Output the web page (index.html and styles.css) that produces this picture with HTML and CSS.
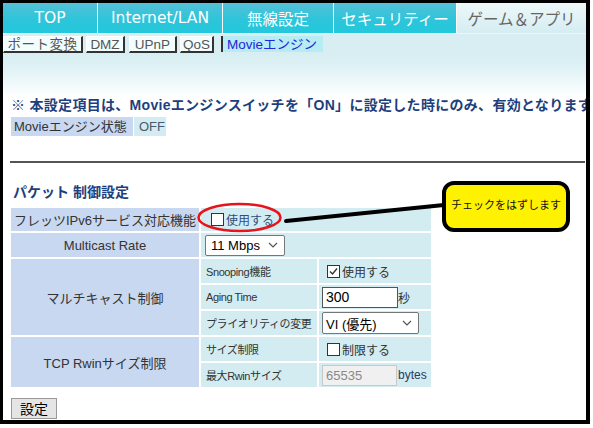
FILE: index.html
```html
<!DOCTYPE html>
<html lang="ja">
<head>
<meta charset="utf-8">
<title>Movieエンジン</title>
<link rel="stylesheet" href="styles.css">
</head>
<body>
<div class="frame">
  <nav class="tabs">
    <div class="tab t1">TOP</div>
    <div class="tab t2">Internet/LAN</div>
    <div class="tab t3">無線設定</div>
    <div class="tab t4">セキュリティー</div>
    <div class="tab t5 active">ゲーム＆アプリ</div>
  </nav>
  <div class="subnav">
    <span class="sub s1">ポート変換</span>
    <span class="sub s2">DMZ</span>
    <span class="sub s3">UPnP</span>
    <span class="sub s4">QoS</span>
    <span class="sub s5">Movieエンジン</span>
  </div>
  <div class="main">
    <p class="notice">※ 本設定項目は、Movieエンジンスイッチを「ON」に設定した時にのみ、有効となります</p>
    <div class="status"><span class="st-label">Movieエンジン状態</span><span class="st-val">OFF</span></div>
    <hr class="rule">
    <h2 class="sec">パケット 制御設定</h2>
    <table class="pkt">
      <colgroup><col class="c1"><col class="c2"><col class="c3"></colgroup>
      <tr class="r1">
        <th>フレッツIPv6サービス対応機能</th>
        <td colspan="2" class="v v1"><span class="cb"></span><span class="lbl blue">使用する</span></td>
      </tr>
      <tr>
        <th>Multicast Rate</th>
        <td colspan="2" class="v v2"><span class="select w80"><span>11 Mbps</span><svg width="10" height="6" viewBox="0 0 10 6"><polyline points="1,1 5,5 9,1" fill="none" stroke="#555" stroke-width="1.2"/></svg></span></td>
      </tr>
      <tr>
        <th rowspan="3">マルチキャスト制御</th>
        <td class="sl">Snooping機能</td>
        <td class="v v3"><svg class="cbs" width="13" height="13" viewBox="0 0 13 13"><rect x="0.5" y="0.5" width="12" height="12" fill="#fff" stroke="#333"/><polyline points="3,6.5 5.5,9 10,3.5" fill="none" stroke="#333" stroke-width="1.4"/></svg><span class="lbl">使用する</span></td>
      </tr>
      <tr>
        <td class="sl">Aging Time</td>
        <td class="v v4"><span class="inp">300</span><span class="unit">秒</span></td>
      </tr>
      <tr>
        <td class="sl">プライオリティの変更</td>
        <td class="v v4"><span class="select w97"><span>VI (優先)</span><svg width="10" height="6" viewBox="0 0 10 6"><polyline points="1,1 5,5 9,1" fill="none" stroke="#555" stroke-width="1.2"/></svg></span></td>
      </tr>
      <tr>
        <th rowspan="2">TCP Rwinサイズ制限</th>
        <td class="sl">サイズ制限</td>
        <td class="v v3"><span class="cb"></span><span class="lbl">制限する</span></td>
      </tr>
      <tr>
        <td class="sl">最大Rwinサイズ</td>
        <td class="v v4"><span class="inp dis">65535</span><span class="bytes">bytes</span></td>
      </tr>
    </table>
    <button class="submit" type="button">設定</button>
  </div>
</div>
<svg class="overlay" width="593" height="428" viewBox="0 0 593 428">
  <ellipse cx="239.5" cy="217.5" rx="41" ry="13.5" fill="none" stroke="#e8141c" stroke-width="2.5"/>
  <line x1="286" y1="221" x2="444" y2="205" stroke="#000" stroke-width="4" stroke-linecap="round"/>
</svg>
<div class="callout">チェックをはずします</div>
</body>
</html>
```
FILE: styles.css
```css
* { box-sizing: border-box; }
html, body { margin: 0; padding: 0; background: #fff; }
body {
  font-family: "Liberation Sans", "Noto Sans CJK JP", sans-serif;
  width: 593px;
  height: 428px;
  position: relative;
  overflow: hidden;
}
.frame {
  width: 590px;
  height: 424px;
  border-style: solid;
  border-color: #000;
  border-width: 3px 4px 4px 3px;
  overflow: hidden;
  background: #fff;
}
.tabs { display: flex; height: 30px; }
.tab {
  display: flex;
  align-items: center;
  justify-content: center;
  color: #fff;
  font-family: "DejaVu Sans", "Noto Sans CJK JP", sans-serif;
  font-size: 15.5px;
  background: linear-gradient(#55c0d8, #2dc5da 55%, #22c8dc);
  border-left: 1px solid #fff;
  white-space: nowrap;
}
.t1 { width: 94px; border-left: 0; }
.t2 { width: 125px; }
.t3 { width: 111px; }
.t4 { width: 123px; }
.t5 { flex: 1; }
.tab.active { background: linear-gradient(#eef8fa, #d4edf1); color: #666; }

.subnav {
  display: flex;
  align-items: flex-end;
  height: 20px;
  border-top: 1px solid #e6fafa;
  background: #d8eef2;
}
.sub {
  display: flex;
  align-items: center;
  justify-content: center;
  height: 17px;
  font-size: 13.5px;
  line-height: 15px;
  color: #555;
  background: #f2fefe;
  border-style: solid;
  border-width: 1px 2px 2px 1px;
  border-color: #fff #333 #333 #fff;
  white-space: nowrap;
  overflow: hidden;
}
.s1 { width: 80px; letter-spacing: 0.5px; }
.s2 { width: 39px; margin-left: 3px; }
.s3 { width: 48px; margin-left: 4px; }
.s4 { width: 34px; margin-left: 3px; }
.s5 {
  width: 102px;
  margin-left: 7px;
  background: #b6ecf4;
  color: #2424d8;
  border-width: 0 0 0 2px;
  border-left-color: #333;
  justify-content: flex-start;
  padding-left: 4px;
  height: 16px;
  align-self: flex-start;
  margin-top: 2px;
}

.main {
  padding: 43px 0 0 8px;
  height: 371px;
  background: linear-gradient(#d6eef2 0, #e2f3f6 18px, #fff 44px) no-repeat;
}
.notice {
  margin: 0;
  font-size: 14px;
  font-weight: bold;
  color: #1e3f7d;
  line-height: 18px;
  white-space: nowrap;
  letter-spacing: 0.3px;
}
.status { display: flex; gap: 1px; margin-top: 3px; height: 19px; font-size: 13px; line-height: 19px; }
.st-label { width: 122px; background: #c8d8f0; color: #333; padding-left: 3px; white-space: nowrap; }
.st-val { width: 32px; background: #d2ecf2; color: #4a5a6a; padding-left: 5px; }
.rule {
  margin: 25px 0 0 -1px;
  border: 0;
  border-top: 2px solid #555;
  width: 575px;
  height: 0;
}
.sec {
  margin: 20px 0 0 2px;
  font-size: 14px;
  font-weight: bold;
  color: #1e3f7d;
  line-height: 18px;
}
.pkt {
  margin: 5px 0 0 -2px;
  border-collapse: separate;
  border-spacing: 2px;
  table-layout: fixed;
  width: 424px;
}
.c1 { width: 188px; }
.c2 { width: 116px; }
.c3 { width: 112px; }
.pkt tr { height: 24px; }
.pkt tr.r1 { height: 23px; }
.pkt th {
  background: #c8d8f0;
  font-weight: normal;
  font-size: 13px;
  color: #333;
  text-align: center;
  padding: 0;
  white-space: nowrap;
}
.pkt td { background: #d2ecf2; padding: 0; white-space: nowrap; overflow: hidden; }
.sl { font-size: 11px; letter-spacing: -0.4px; color: #333; padding-left: 5px !important; }
.v { font-size: 12px; color: #333; }
.v1 { padding-left: 10px !important; }
.v2 { padding-left: 4px !important; }
.v3 { padding-left: 8px !important; }
.v4 { padding-left: 3px !important; }
.v1, .v3 { vertical-align: middle; }
.cb {
  display: inline-block;
  width: 13px;
  height: 13px;
  border: 1px solid #333;
  background: #fff;
  vertical-align: middle;
}
.cbs { vertical-align: middle; display: inline-block; }
.lbl { vertical-align: middle; margin-left: 2px; font-size: 12px; color: #333; }
.lbl.blue { color: #2e4e80; }
.select {
  display: inline-flex;
  align-items: center;
  justify-content: space-between;
  height: 21px;
  border: 1px solid #767676;
  border-radius: 2px;
  background: #fff;
  font-size: 13px;
  color: #000;
  padding: 0 6px 0 5px;
  vertical-align: middle;
}
.w80 { width: 80px; }
.w97 { width: 97px; height: 22px; padding-left: 3px; }
.inp {
  display: inline-flex;
  align-items: center;
  width: 76px;
  height: 21px;
  border: 1px solid #555;
  background: #fff;
  font-size: 14px;
  color: #000;
  padding-left: 3px;
  vertical-align: middle;
}
.inp.dis { width: 75px; background: #f0f0f0; border-color: #c8c8c8; color: #888; font-size: 13px; }
.unit { vertical-align: middle; font-size: 12px; color: #333; }
.bytes { vertical-align: middle; font-size: 12px; color: #2a3a60; margin-left: 1px; }
.submit {
  display: block;
  margin-top: 9px;
  width: 46px;
  height: 21px;
  padding: 0;
  border: 1px solid #999;
  background: #e5e5e5;
  font-family: "Liberation Sans", "Noto Sans CJK JP", sans-serif;
  font-size: 14px;
  color: #000;
  line-height: 1;
}
.overlay { position: absolute; left: 0; top: 0; pointer-events: none; }
.callout {
  position: absolute;
  left: 442px;
  top: 181px;
  width: 128px;
  height: 51px;
  border: 4px solid #000;
  border-radius: 12px;
  background: #fff200;
  color: #111;
  font-size: 11px;
  display: flex;
  align-items: center;
  justify-content: center;
  white-space: nowrap;
  padding-bottom: 6px;
}
```
